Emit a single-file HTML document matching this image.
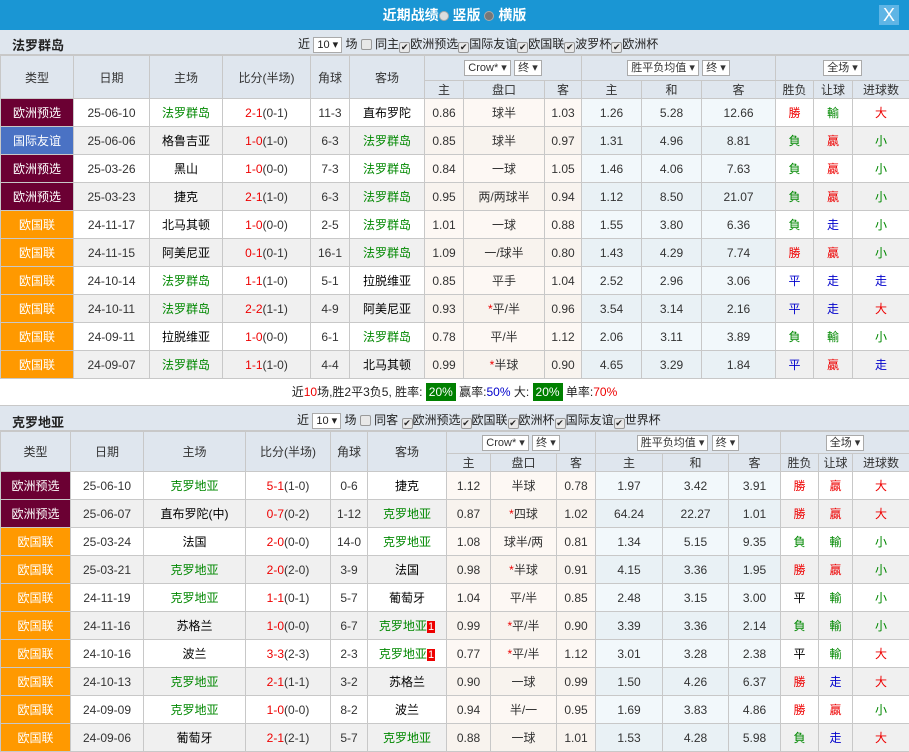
<!DOCTYPE html><html><head><meta charset="utf-8"><style>
*{margin:0;padding:0;box-sizing:border-box}
body{width:909px;height:752px;overflow:hidden;background:#fff;font-family:"Liberation Sans","Noto Sans CJK SC",sans-serif;font-size:12px;color:#333}
.top{height:30px;background:#1a96d4;color:#fff;text-align:center;font-size:14px;font-weight:bold;line-height:30px;position:relative}
.top .x{position:absolute;right:10px;top:5px;width:20px;height:20px;background:#5fb5e5;color:#fff;font-size:18px;line-height:20px;font-weight:normal}
.rad{display:inline-block;width:10px;height:10px;border-radius:50%;background:#ddd;border:1px solid #aaa;vertical-align:-1px}
.sec{height:25px;background:#dfe6ee;position:relative;border-bottom:1px solid #c8c8c8}
.sec b{position:absolute;left:12px;top:5px;font-size:13px;color:#222}
.sec .f{position:absolute;top:5px;font-size:12px;color:#222}
.sel{display:inline-block;border:1px solid #aaa;background:#fff;padding:0 3px;height:16px;line-height:14px;font-size:11px}
.cb{display:inline-block;width:11px;height:11px;border:1px solid #999;background:#e8e8e8;vertical-align:-2px;font-size:9px;line-height:9px;text-align:center;border-radius:2px}
table{border-collapse:collapse;table-layout:fixed;width:909px}
td{border:1px solid #c8c8c8;text-align:center;white-space:nowrap;overflow:hidden;height:28px;font-size:12px}
th{border:1px solid #c8c8c8;background:#dfe6ee;font-weight:normal;color:#333;font-size:12px}
.h1 th{height:25px}.h2 th{height:17px}
.t2 .h1 th{height:22px}.t2 .h2 th{height:16px}
.q{background:#6b0033;color:#fff}.y{background:#ff9900;color:#fff}.b{background:#4a72c4;color:#fff}
.g{color:#080}.r{color:#e00}.bl{color:#00c}.k{color:#000}
.a{background:#fdf8f4}.o{background:#f2f8fb}
tr.e td{background:#f0f0f0}tr.e td.a{background:#f8f3ee}tr.e td.o{background:#e9f1f5}
tr.e td.y{background:#ff9900}tr.e td.q{background:#6b0033}tr.e td.b{background:#4a72c4}
.s{height:27px;text-align:center;line-height:27px;border-bottom:1px solid #c8c8c8;color:#222}
.gb{background:#008000;color:#fff;padding:2px 3px}
.n1{background:#e00;color:#fff;font-size:11px;padding:0 1px}
</style></head><body>
<div class="top">近期战绩<span class="rad"></span> 竖版 <span class="rad" style="background:#777"></span> 横版<span class="x">X</span></div>
<div class="sec"><b>法罗群岛</b><span class="f" style="left:298px">近 <span class="sel">10 ▾</span> 场 <span class="cb"></span> 同主<span class="cb">✔</span>欧洲预选<span class="cb">✔</span>国际友谊<span class="cb">✔</span>欧国联<span class="cb">✔</span>波罗杯<span class="cb">✔</span>欧洲杯</span></div>
<table>
<colgroup><col style="width:73px"><col style="width:76px"><col style="width:73px"><col style="width:88px"><col style="width:39px"><col style="width:75px"><col style="width:39px"><col style="width:81px"><col style="width:37px"><col style="width:60px"><col style="width:60px"><col style="width:74px"><col style="width:38px"><col style="width:39px"><col style="width:57px"></colgroup>
<tr class="h1"><th rowspan="2">类型</th><th rowspan="2">日期</th><th rowspan="2">主场</th><th rowspan="2">比分(半场)</th><th rowspan="2">角球</th><th rowspan="2">客场</th><th colspan="3"><span class="sel">Crow* ▾</span> <span class="sel">终 ▾</span></th><th colspan="3"><span class="sel">胜平负均值 ▾</span> <span class="sel">终 ▾</span></th><th colspan="3"><span class="sel">全场 ▾</span></th></tr>
<tr class="h2"><th>主</th><th>盘口</th><th>客</th><th>主</th><th>和</th><th>客</th><th>胜负</th><th>让球</th><th>进球数</th></tr>
<tr><td class="q">欧洲预选</td><td>25-06-10</td><td class="g">法罗群岛</td><td><span class="r">2-1</span>(0-1)</td><td>11-3</td><td class="k">直布罗陀</td><td class="a">0.86</td><td class="a">球半</td><td class="a">1.03</td><td class="o">1.26</td><td class="o">5.28</td><td class="o">12.66</td><td class="r">勝</td><td class="g">輸</td><td class="r">大</td></tr>
<tr class="e"><td class="b">国际友谊</td><td>25-06-06</td><td class="k">格鲁吉亚</td><td><span class="r">1-0</span>(1-0)</td><td>6-3</td><td class="g">法罗群岛</td><td class="a">0.85</td><td class="a">球半</td><td class="a">0.97</td><td class="o">1.31</td><td class="o">4.96</td><td class="o">8.81</td><td class="g">負</td><td class="r">贏</td><td class="g">小</td></tr>
<tr><td class="q">欧洲预选</td><td>25-03-26</td><td class="k">黑山</td><td><span class="r">1-0</span>(0-0)</td><td>7-3</td><td class="g">法罗群岛</td><td class="a">0.84</td><td class="a">一球</td><td class="a">1.05</td><td class="o">1.46</td><td class="o">4.06</td><td class="o">7.63</td><td class="g">負</td><td class="r">贏</td><td class="g">小</td></tr>
<tr class="e"><td class="q">欧洲预选</td><td>25-03-23</td><td class="k">捷克</td><td><span class="r">2-1</span>(1-0)</td><td>6-3</td><td class="g">法罗群岛</td><td class="a">0.95</td><td class="a">两/两球半</td><td class="a">0.94</td><td class="o">1.12</td><td class="o">8.50</td><td class="o">21.07</td><td class="g">負</td><td class="r">贏</td><td class="g">小</td></tr>
<tr><td class="y">欧国联</td><td>24-11-17</td><td class="k">北马其顿</td><td><span class="r">1-0</span>(0-0)</td><td>2-5</td><td class="g">法罗群岛</td><td class="a">1.01</td><td class="a">一球</td><td class="a">0.88</td><td class="o">1.55</td><td class="o">3.80</td><td class="o">6.36</td><td class="g">負</td><td class="bl">走</td><td class="g">小</td></tr>
<tr class="e"><td class="y">欧国联</td><td>24-11-15</td><td class="k">阿美尼亚</td><td><span class="r">0-1</span>(0-1)</td><td>16-1</td><td class="g">法罗群岛</td><td class="a">1.09</td><td class="a">一/球半</td><td class="a">0.80</td><td class="o">1.43</td><td class="o">4.29</td><td class="o">7.74</td><td class="r">勝</td><td class="r">贏</td><td class="g">小</td></tr>
<tr><td class="y">欧国联</td><td>24-10-14</td><td class="g">法罗群岛</td><td><span class="r">1-1</span>(1-0)</td><td>5-1</td><td class="k">拉脱维亚</td><td class="a">0.85</td><td class="a">平手</td><td class="a">1.04</td><td class="o">2.52</td><td class="o">2.96</td><td class="o">3.06</td><td class="bl">平</td><td class="bl">走</td><td class="bl">走</td></tr>
<tr class="e"><td class="y">欧国联</td><td>24-10-11</td><td class="g">法罗群岛</td><td><span class="r">2-2</span>(1-1)</td><td>4-9</td><td class="k">阿美尼亚</td><td class="a">0.93</td><td class="a"><span class="r">*</span>平/半</td><td class="a">0.96</td><td class="o">3.54</td><td class="o">3.14</td><td class="o">2.16</td><td class="bl">平</td><td class="bl">走</td><td class="r">大</td></tr>
<tr><td class="y">欧国联</td><td>24-09-11</td><td class="k">拉脱维亚</td><td><span class="r">1-0</span>(0-0)</td><td>6-1</td><td class="g">法罗群岛</td><td class="a">0.78</td><td class="a">平/半</td><td class="a">1.12</td><td class="o">2.06</td><td class="o">3.11</td><td class="o">3.89</td><td class="g">負</td><td class="g">輸</td><td class="g">小</td></tr>
<tr class="e"><td class="y">欧国联</td><td>24-09-07</td><td class="g">法罗群岛</td><td><span class="r">1-1</span>(1-0)</td><td>4-4</td><td class="k">北马其顿</td><td class="a">0.99</td><td class="a"><span class="r">*</span>半球</td><td class="a">0.90</td><td class="o">4.65</td><td class="o">3.29</td><td class="o">1.84</td><td class="bl">平</td><td class="r">贏</td><td class="bl">走</td></tr>
</table>
<div class="s">近<span class="r">10</span>场,胜2平3负5, 胜率: <span class="gb">20%</span> 赢率:<span class="bl">50%</span> 大: <span class="gb">20%</span> 单率:<span class="r">70%</span></div>
<div class="sec"><b style="top:6px">克罗地亚</b><span class="f" style="left:297px;top:5px">近 <span class="sel">10 ▾</span> 场 <span class="cb"></span> 同客 <span class="cb">✔</span>欧洲预选<span class="cb">✔</span>欧国联<span class="cb">✔</span>欧洲杯<span class="cb">✔</span>国际友谊<span class="cb">✔</span>世界杯</span></div>
<table class="t2">
<colgroup><col style="width:70px"><col style="width:73px"><col style="width:102px"><col style="width:85px"><col style="width:37px"><col style="width:79px"><col style="width:44px"><col style="width:66px"><col style="width:39px"><col style="width:67px"><col style="width:66px"><col style="width:52px"><col style="width:38px"><col style="width:34px"><col style="width:57px"></colgroup>
<tr class="h1"><th rowspan="2">类型</th><th rowspan="2">日期</th><th rowspan="2">主场</th><th rowspan="2">比分(半场)</th><th rowspan="2">角球</th><th rowspan="2">客场</th><th colspan="3"><span class="sel">Crow* ▾</span> <span class="sel">终 ▾</span></th><th colspan="3"><span class="sel">胜平负均值 ▾</span> <span class="sel">终 ▾</span></th><th colspan="3"><span class="sel">全场 ▾</span></th></tr>
<tr class="h2"><th>主</th><th>盘口</th><th>客</th><th>主</th><th>和</th><th>客</th><th>胜负</th><th>让球</th><th>进球数</th></tr>
<tr><td class="q">欧洲预选</td><td>25-06-10</td><td class="g">克罗地亚</td><td><span class="r">5-1</span>(1-0)</td><td>0-6</td><td class="k">捷克</td><td class="a">1.12</td><td class="a">半球</td><td class="a">0.78</td><td class="o">1.97</td><td class="o">3.42</td><td class="o">3.91</td><td class="r">勝</td><td class="r">贏</td><td class="r">大</td></tr>
<tr class="e"><td class="q">欧洲预选</td><td>25-06-07</td><td class="k">直布罗陀(中)</td><td><span class="r">0-7</span>(0-2)</td><td>1-12</td><td class="g">克罗地亚</td><td class="a">0.87</td><td class="a"><span class="r">*</span>四球</td><td class="a">1.02</td><td class="o">64.24</td><td class="o">22.27</td><td class="o">1.01</td><td class="r">勝</td><td class="r">贏</td><td class="r">大</td></tr>
<tr><td class="y">欧国联</td><td>25-03-24</td><td class="k">法国</td><td><span class="r">2-0</span>(0-0)</td><td>14-0</td><td class="g">克罗地亚</td><td class="a">1.08</td><td class="a">球半/两</td><td class="a">0.81</td><td class="o">1.34</td><td class="o">5.15</td><td class="o">9.35</td><td class="g">負</td><td class="g">輸</td><td class="g">小</td></tr>
<tr class="e"><td class="y">欧国联</td><td>25-03-21</td><td class="g">克罗地亚</td><td><span class="r">2-0</span>(2-0)</td><td>3-9</td><td class="k">法国</td><td class="a">0.98</td><td class="a"><span class="r">*</span>半球</td><td class="a">0.91</td><td class="o">4.15</td><td class="o">3.36</td><td class="o">1.95</td><td class="r">勝</td><td class="r">贏</td><td class="g">小</td></tr>
<tr><td class="y">欧国联</td><td>24-11-19</td><td class="g">克罗地亚</td><td><span class="r">1-1</span>(0-1)</td><td>5-7</td><td class="k">葡萄牙</td><td class="a">1.04</td><td class="a">平/半</td><td class="a">0.85</td><td class="o">2.48</td><td class="o">3.15</td><td class="o">3.00</td><td class="k">平</td><td class="g">輸</td><td class="g">小</td></tr>
<tr class="e"><td class="y">欧国联</td><td>24-11-16</td><td class="k">苏格兰</td><td><span class="r">1-0</span>(0-0)</td><td>6-7</td><td class="g">克罗地亚<span class="n1">1</span></td><td class="a">0.99</td><td class="a"><span class="r">*</span>平/半</td><td class="a">0.90</td><td class="o">3.39</td><td class="o">3.36</td><td class="o">2.14</td><td class="g">負</td><td class="g">輸</td><td class="g">小</td></tr>
<tr><td class="y">欧国联</td><td>24-10-16</td><td class="k">波兰</td><td><span class="r">3-3</span>(2-3)</td><td>2-3</td><td class="g">克罗地亚<span class="n1">1</span></td><td class="a">0.77</td><td class="a"><span class="r">*</span>平/半</td><td class="a">1.12</td><td class="o">3.01</td><td class="o">3.28</td><td class="o">2.38</td><td class="k">平</td><td class="g">輸</td><td class="r">大</td></tr>
<tr class="e"><td class="y">欧国联</td><td>24-10-13</td><td class="g">克罗地亚</td><td><span class="r">2-1</span>(1-1)</td><td>3-2</td><td class="k">苏格兰</td><td class="a">0.90</td><td class="a">一球</td><td class="a">0.99</td><td class="o">1.50</td><td class="o">4.26</td><td class="o">6.37</td><td class="r">勝</td><td class="bl">走</td><td class="r">大</td></tr>
<tr><td class="y">欧国联</td><td>24-09-09</td><td class="g">克罗地亚</td><td><span class="r">1-0</span>(0-0)</td><td>8-2</td><td class="k">波兰</td><td class="a">0.94</td><td class="a">半/一</td><td class="a">0.95</td><td class="o">1.69</td><td class="o">3.83</td><td class="o">4.86</td><td class="r">勝</td><td class="r">贏</td><td class="g">小</td></tr>
<tr class="e"><td class="y">欧国联</td><td>24-09-06</td><td class="k">葡萄牙</td><td><span class="r">2-1</span>(2-1)</td><td>5-7</td><td class="g">克罗地亚</td><td class="a">0.88</td><td class="a">一球</td><td class="a">1.01</td><td class="o">1.53</td><td class="o">4.28</td><td class="o">5.98</td><td class="g">負</td><td class="bl">走</td><td class="r">大</td></tr>
</table>
</body></html>
